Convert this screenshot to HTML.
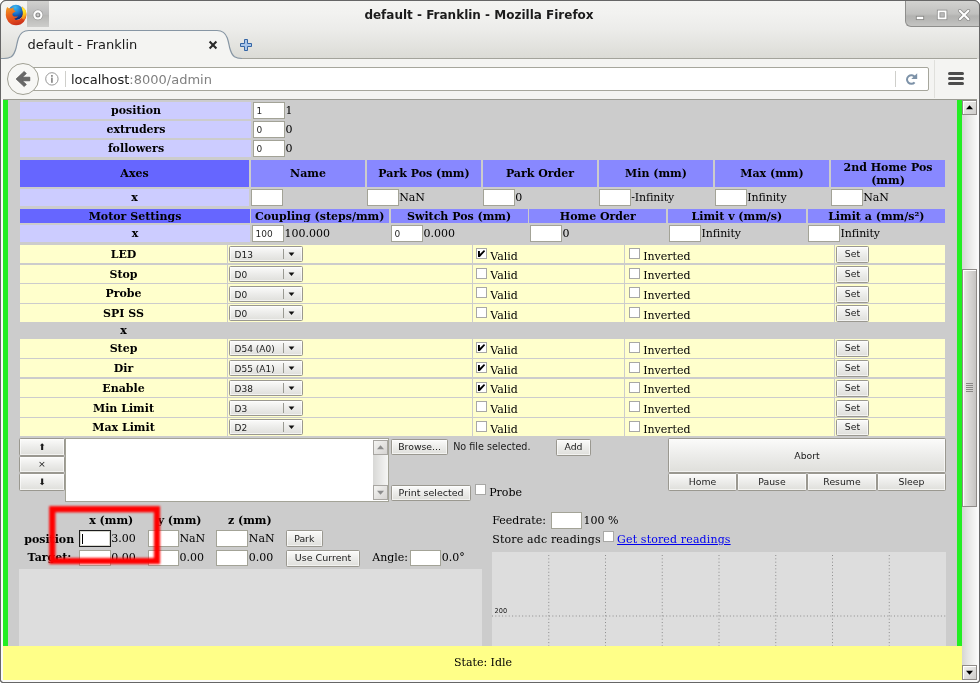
<!DOCTYPE html>
<html lang="en"><head><meta charset="utf-8"><title>default - Franklin</title>
<style>
html,body{margin:0;padding:0}
body{will-change:transform;width:980px;height:683px;overflow:hidden;position:relative;background:#fff;font-family:"DejaVu Serif","Liberation Serif",serif;font-size:11px;color:#000}
div,span,svg.a{position:absolute;box-sizing:border-box}
.t{font-family:"DejaVu Serif","Liberation Serif",serif;font-size:11px;line-height:13px;white-space:pre}
.b{font-weight:bold}
.c{transform:translateX(-50%);text-align:center}
.s{font-family:"DejaVu Sans","Liberation Sans",sans-serif;font-size:9.3px;line-height:12px;white-space:pre;color:#1a1a1a}
.in{background:#fff;border:1px solid #a3a397}
.inf{background:#fff;border:1px solid #1c1c1c;box-shadow:inset 0 0 0 1px #d8d8d0}
.btn{border:1px solid #9a9890;border-radius:1.5px;background:linear-gradient(#fbfbfa,#ececea 50%,#dfdfdb);box-shadow:inset 0 0 0 1px rgba(255,255,255,.6)}
.cb{width:11px;height:11px;background:#fff;border:1px solid #a8a8a6}
.lab{background:#ccccff}
.h1{background:#6666ff}
.h2{background:#8888ff}
.y{background:#ffffcc}
.ttl{font-family:"DejaVu Sans","Liberation Sans",sans-serif;font-weight:bold;font-size:12px;line-height:16px;white-space:pre;color:#1c1c1c}
.u{font-family:"DejaVu Sans","Liberation Sans",sans-serif;font-size:13px;line-height:16px;white-space:pre;color:#1a1a1a}
.u i{font-style:normal;color:#808080}
.tiny{font-family:"DejaVu Sans","Liberation Sans",sans-serif;font-size:6.6px;line-height:9px;color:#222;white-space:pre}
</style></head><body>
<div id="win" style="left:0;top:0;width:980px;height:683px;background:#fafafa;border:1px solid #666;border-radius:6px 6px 3px 3px;overflow:hidden"></div>
<div class="" style="left:1px;top:1px;width:978px;height:58px;background:linear-gradient(#f4f4f2 0,#f2f2f0 12px,#ececea 28px,#e4e4e0 43px,#dbdbd6 57px);border-radius:5px 5px 0 0"></div>
<div class="" style="left:3px;top:58px;width:974px;height:1px;background:#a3a39b"></div>
<div class="" style="left:1px;top:59px;width:978px;height:40px;background:#f4f4f2"></div>
<div class="" style="left:3px;top:99px;width:974px;height:1px;background:#9a9a92"></div>
<svg class="a" style="left:5px;top:4px" width="22" height="22" viewBox="0 0 22 22">
<defs>
<radialGradient id="gl" cx="0.45" cy="0.18" r="0.9"><stop offset="0" stop-color="#3ebcf2"/><stop offset="0.45" stop-color="#1a74cc"/><stop offset="0.8" stop-color="#0b2f82"/><stop offset="1" stop-color="#08205e"/></radialGradient>
<linearGradient id="fx" x1="0.2" y1="0" x2="0.5" y2="1"><stop offset="0" stop-color="#f49a20"/><stop offset="0.4" stop-color="#ea671e"/><stop offset="0.8" stop-color="#dc421c"/><stop offset="1" stop-color="#c9301a"/></linearGradient>
<linearGradient id="yl" x1="0" y1="0" x2="0.2" y2="1"><stop offset="0" stop-color="#fbd23a"/><stop offset="0.35" stop-color="#ffee2a"/><stop offset="0.7" stop-color="#fbbf1c"/><stop offset="1" stop-color="#ef7d1c"/></linearGradient>
</defs>
<circle cx="10.9" cy="8.4" r="7.7" fill="url(#gl)"/>
<path d="M2.2 3.1 C1.2 4.8 0.8 7.4 0.9 9.4 A10.3 10.3 0 0 0 11.1 21.2 A10.3 10.3 0 0 0 21.3 9.5 C21.2 7.5 20.4 5.8 19.7 4.9 L17 2.6 L16.7 4.1 L17.8 7.5 L17.8 10.6 L16.3 14 C15.8 14.5 15 15 14 15.5 C13.2 16 12 16.3 10.8 15.9 C10.3 15.7 9.8 15.3 9.4 14.4 C11 14.2 12.6 13.2 12.9 12.2 C12 12.5 10.8 12.7 9.6 12.5 C9 12.4 8.2 12 7.5 10.9 C7.4 10.3 7.5 9.6 7.9 9 C8.6 8.4 9.8 8 10.8 7.2 C9.8 6.8 9 6.2 8.6 5.6 L8.3 3.2 L6.8 4.6 C6 4.3 5 4.2 4.1 4.6 Z" fill="url(#fx)"/>
<path d="M17 2.6 L19.7 4.9 C20.6 6 21.2 7.5 21.2 9 C21.3 10.3 21.2 11.5 20.8 12.5 C20.5 13.8 20 15 19.3 15.9 C18.5 15.5 17.2 14.6 16.3 14 C17.3 13 17.8 11.8 17.8 10.6 C18 9.4 18 8.5 17.8 7.5 C17.5 6.2 17.1 5 16.7 4.1 Z" fill="url(#yl)"/>
</svg>
<div class="" style="left:27px;top:1px;width:22px;height:26px;background:linear-gradient(#d1d1cf,#bababa 52%,#b6b6b4 56%,#cdcdcb)"></div>
<svg class="a" style="left:31px;top:8px" width="14" height="14" viewBox="0 0 14 14"><circle cx="6.9" cy="6.9" r="5.3" fill="#858583" opacity=".6"/><circle cx="6.9" cy="6.9" r="4.6" fill="#fff"/><circle cx="6.9" cy="6.9" r="1.9" fill="#c9c9c9" stroke="#8c8c8c" stroke-width="1.2"/></svg>
<span class="ttl c" style="left:479px;top:7px">default - Franklin - Mozilla Firefox</span>
<div class="" style="left:905px;top:1px;width:74px;height:26px;background:linear-gradient(#d2d2d0,#c0c0be 13px,#b3b3b1 15px,#b6b6b4 18px,#c4c4c2);border-radius:0 5px 0 6px;border-left:1px solid #8e8e8c;border-bottom:1px solid #8e8e8c"></div>
<svg class="a" style="left:905px;top:1px" width="74" height="26" viewBox="905 1 74 26">
<rect x="916.3" y="16.3" width="7.4" height="3.3" fill="#fff" stroke="#8a8a88" stroke-width=".9"/>
<rect x="936.9" y="9.7" width="10.4" height="10.4" fill="#8c8c8a"/>
<rect x="937.7" y="10.5" width="8.8" height="8.8" fill="#fff"/>
<rect x="939.5" y="12.3" width="5.2" height="5.2" fill="#8e8e8c"/>
<rect x="940.3" y="13.1" width="3.6" height="3.6" fill="#bababa"/>
<path d="M959.8 10.8 L968.4 19.2 M968.4 10.8 L959.8 19.2" stroke="#8a8a88" stroke-width="3.6" stroke-linecap="round"/>
<path d="M959.8 10.8 L968.4 19.2 M968.4 10.8 L959.8 19.2" stroke="#fff" stroke-width="2.1" stroke-linecap="round"/>
</svg>
<svg class="a" style="left:0;top:28px" width="260" height="32" viewBox="0 28 260 32">
<path d="M1 58.5 L3.8 58.5 C6.8 58.5 9.3 58.2 11.3 56.8 C14.3 54.5 15.3 51 16.2 47.5 C16.8 45 17.3 41.5 18.5 38 C20.3 33 23.8 30.5 28.8 30.5 L217 30.5 C222 30.5 225.5 33 227.3 38 C228.5 41.5 229 45 229.6 47.5 C230.5 51 231.5 54.5 234.5 56.8 C236.5 58.2 239 58.5 242 58.5 L242 60 L1 60 Z" fill="#f4f4f2"/>
<path d="M1 58.5 L3.8 58.5 C6.8 58.5 9.3 58.2 11.3 56.8 C14.3 54.5 15.3 51 16.2 47.5 C16.8 45 17.3 41.5 18.5 38 C20.3 33 23.8 30.5 28.8 30.5 L217 30.5 C222 30.5 225.5 33 227.3 38 C228.5 41.5 229 45 229.6 47.5 C230.5 51 231.5 54.5 234.5 56.8 C236.5 58.2 239 58.5 242 58.5" fill="none" stroke="#8796a4" stroke-width="1.2"/>
</svg>
<span class="u" style="left:27.5px;top:37px">default - Franklin</span>
<svg class="a" style="left:208px;top:40px" width="10" height="10" viewBox="0 0 10 10"><path d="M1.6 1.6 L8.4 8.4 M8.4 1.6 L1.6 8.4" stroke="#2a2a2a" stroke-width="2.1"/></svg>
<svg class="a" style="left:239px;top:38px" width="14" height="14" viewBox="0 0 14 14"><path d="M5.5 1.5 H8.5 V5.5 H12.5 V8.5 H8.5 V12.5 H5.5 V8.5 H1.5 V5.5 H5.5 Z" fill="#a9c6ea" stroke="#3465a4" stroke-width="1" stroke-linejoin="round"/></svg>
<div class="" style="left:30px;top:67px;width:899px;height:24px;background:#fff;border:1px solid #a6a69c;border-radius:2px"></div>
<div class="" style="left:7px;top:63px;width:32px;height:32px;background:#f7f7f5;border:1px solid #a0a094;border-radius:16px"></div>
<svg class="a" style="left:14px;top:69px" width="18" height="20" viewBox="14 69 18 20"><path d="M16.1 79 L24.2 71.4 L26.3 73.6 L22.4 77.2 L29.8 77.2 L29.8 80.8 L22.4 80.8 L26.3 84.4 L24.2 86.6 Z" fill="#686868" stroke="#4e4e4e" stroke-width=".7" stroke-linejoin="round"/></svg>
<svg class="a" style="left:44px;top:71px" width="16" height="16" viewBox="44 71 16 16"><circle cx="51.9" cy="78.9" r="6.2" fill="none" stroke="#979797" stroke-width="1"/><rect x="51" y="77.6" width="1.8" height="5.2" fill="#8e8e8e"/><rect x="51" y="75" width="1.8" height="1.8" fill="#8e8e8e"/></svg>
<div class="" style="left:65px;top:71px;width:1px;height:16px;background:#cfcfcb"></div>
<span class="u" style="left:71px;top:72px">localhost<i>:8000/admin</i></span>
<div class="" style="left:895px;top:71px;width:1px;height:16px;background:#cfcfcb"></div>
<svg class="a" style="left:903px;top:70px" width="18" height="18" viewBox="903 70 18 18"><path d="M914.6 82.3 A4.3 4.3 0 1 1 914.9 77.2" fill="none" stroke="#7d92a8" stroke-width="2"/><path d="M917.2 73.3 L917.2 79.1 L911.3 79.1 Z" fill="#7d92a8"/></svg>
<div class="" style="left:934px;top:60px;width:1px;height:38px;background:#e0e0dc"></div>
<div class="" style="left:948px;top:72px;width:16px;height:3px;background:#4c4c4c;border-radius:1.5px"></div>
<div class="" style="left:948px;top:77px;width:16px;height:3px;background:#4c4c4c;border-radius:1.5px"></div>
<div class="" style="left:948px;top:82px;width:16px;height:3px;background:#4c4c4c;border-radius:1.5px"></div>
<div class="" style="left:3px;top:100px;width:959px;height:580px;background:#cccccc"></div>
<div class="" style="left:3px;top:100px;width:5px;height:546px;background:#22ee22"></div>
<div class="" style="left:957px;top:100px;width:5px;height:546px;background:#22ee22"></div>
<div class="" style="left:962px;top:100px;width:15px;height:580px;background:linear-gradient(90deg,#d6d6d4,#e6e6e4 40%,#f8f8f7)"></div>
<div class="" style="left:962px;top:100px;width:15px;height:15px;background:linear-gradient(135deg,#f2f2f0,#cfcdcb);border:1px solid #8f8b88;box-shadow:inset 1px 1px 0 #fff"></div>
<svg class="a" style="left:962px;top:100px" width="15" height="15"><path d="M4 9.2 L11 9.2 L7.5 5.2 Z" fill="#000"/></svg>
<div class="" style="left:962px;top:665px;width:15px;height:15px;background:linear-gradient(135deg,#f2f2f0,#cfcdcb);border:1px solid #8f8b88;box-shadow:inset 1px 1px 0 #fff"></div>
<svg class="a" style="left:962px;top:665px" width="15" height="15"><path d="M4 5.8 L11 5.8 L7.5 9.8 Z" fill="#000"/></svg>
<div class="" style="left:962px;top:269px;width:15px;height:238px;background:linear-gradient(90deg,#eceae8,#d4d2d0 60%,#c6c4c2);border:1px solid #8f8b88;box-shadow:inset 1px 1px 0 #fff"></div>
<div class="" style="left:966px;top:383px;width:7px;height:1px;background:#8a8886"></div>
<div class="" style="left:966px;top:385px;width:7px;height:1px;background:#8a8886"></div>
<div class="" style="left:966px;top:387px;width:7px;height:1px;background:#8a8886"></div>
<div class="" style="left:966px;top:389px;width:7px;height:1px;background:#8a8886"></div>
<div class="" style="left:966px;top:391px;width:7px;height:1px;background:#8a8886"></div>
<div class="lab" style="left:20px;top:102px;width:231px;height:17px;"></div>
<span class="t c b" style="left:136px;top:104px;">position</span>
<div class="in" style="left:253px;top:102px;width:32px;height:17px"></div>
<span class="s" style="left:256.5px;top:105px;font-size:9px;color:#2a2a2a">1</span>
<span class="t" style="left:285.4px;top:104px;">1</span>
<div class="lab" style="left:20px;top:121px;width:231px;height:17px;"></div>
<span class="t c b" style="left:136px;top:123px;">extruders</span>
<div class="in" style="left:253px;top:121px;width:32px;height:17px"></div>
<span class="s" style="left:256.5px;top:124px;font-size:9px;color:#2a2a2a">0</span>
<span class="t" style="left:285.4px;top:123px;">0</span>
<div class="lab" style="left:20px;top:140px;width:231px;height:17px;"></div>
<span class="t c b" style="left:136px;top:142px;">followers</span>
<div class="in" style="left:253px;top:140px;width:32px;height:17px"></div>
<span class="s" style="left:256.5px;top:143px;font-size:9px;color:#2a2a2a">0</span>
<span class="t" style="left:285.4px;top:142px;">0</span>
<div class="h1" style="left:20px;top:160px;width:229px;height:27px;"></div>
<span class="t c b" style="left:134.5px;top:167px;">Axes</span>
<div class="h2" style="left:251px;top:160px;width:114px;height:27px;"></div>
<span class="t c b" style="left:308px;top:167px;">Name</span>
<div class="h2" style="left:367px;top:160px;width:114px;height:27px;"></div>
<span class="t c b" style="left:424px;top:167px;">Park Pos (mm)</span>
<div class="h2" style="left:483px;top:160px;width:114px;height:27px;"></div>
<span class="t c b" style="left:540px;top:167px;">Park Order</span>
<div class="h2" style="left:599px;top:160px;width:114px;height:27px;"></div>
<span class="t c b" style="left:656px;top:167px;">Min (mm)</span>
<div class="h2" style="left:715px;top:160px;width:114px;height:27px;"></div>
<span class="t c b" style="left:772px;top:167px;">Max (mm)</span>
<div class="h2" style="left:831px;top:160px;width:114px;height:27px;"></div>
<span class="t c b" style="left:888px;top:161px;">2nd Home Pos</span>
<span class="t c b" style="left:888px;top:174px;">(mm)</span>
<div class="lab" style="left:20px;top:189px;width:229px;height:17px;"></div>
<span class="t c b" style="left:134.5px;top:191px;">x</span>
<div class="in" style="left:251px;top:189px;width:32px;height:17px"></div>
<div class="in" style="left:367px;top:189px;width:32px;height:17px"></div>
<span class="t" style="left:399.2px;top:191px;">NaN</span>
<div class="in" style="left:483px;top:189px;width:32px;height:17px"></div>
<span class="t" style="left:515.2px;top:191px;">0</span>
<div class="in" style="left:599px;top:189px;width:32px;height:17px"></div>
<span class="t" style="left:631.2px;top:191px;letter-spacing:-.12px">-Infinity</span>
<div class="in" style="left:715px;top:189px;width:32px;height:17px"></div>
<span class="t" style="left:747.2px;top:191px;letter-spacing:-.12px">Infinity</span>
<div class="in" style="left:831px;top:189px;width:32px;height:17px"></div>
<span class="t" style="left:863.2px;top:191px;">NaN</span>
<div class="h1" style="left:20px;top:209px;width:230px;height:14px;"></div>
<span class="t c b" style="left:135px;top:209.5px;">Motor Settings</span>
<div class="h2" style="left:251px;top:209px;width:138px;height:14px;"></div>
<span class="t c b" style="left:319.7px;top:209.5px;">Coupling (steps/mm)</span>
<div class="h2" style="left:391px;top:209px;width:137px;height:14px;"></div>
<span class="t c b" style="left:459.1px;top:209.5px;">Switch Pos (mm)</span>
<div class="h2" style="left:529px;top:209px;width:137px;height:14px;"></div>
<span class="t c b" style="left:597.8px;top:209.5px;">Home Order</span>
<div class="h2" style="left:668px;top:209px;width:138px;height:14px;"></div>
<span class="t c b" style="left:736.9px;top:209.5px;">Limit v (mm/s)</span>
<div class="h2" style="left:808px;top:209px;width:137px;height:14px;"></div>
<span class="t c b" style="left:876.3px;top:209.5px;">Limit a (mm/s²)</span>
<div class="lab" style="left:20px;top:225px;width:230px;height:17px;"></div>
<span class="t c b" style="left:135px;top:226.5px;">x</span>
<div class="in" style="left:252px;top:225px;width:32px;height:17px"></div>
<span class="s" style="left:255.5px;top:227.5px;font-size:9px;color:#2a2a2a">100</span>
<span class="t" style="left:284.6px;top:226.5px;">100.000</span>
<div class="in" style="left:391px;top:225px;width:32px;height:17px"></div>
<span class="s" style="left:394.5px;top:227.5px;font-size:9px;color:#2a2a2a">0</span>
<span class="t" style="left:423.6px;top:226.5px;">0.000</span>
<div class="in" style="left:530px;top:225px;width:32px;height:17px"></div>
<span class="t" style="left:562.6px;top:226.5px;">0</span>
<div class="in" style="left:669px;top:225px;width:32px;height:17px"></div>
<span class="t" style="left:701.6px;top:226.5px;letter-spacing:-.12px">Infinity</span>
<div class="in" style="left:808px;top:225px;width:32px;height:17px"></div>
<span class="t" style="left:840.6px;top:226.5px;letter-spacing:-.12px">Infinity</span>
<div class="y" style="left:20px;top:245px;width:207px;height:18px;"></div>
<span class="t c b" style="left:123.5px;top:247.95px;">LED</span>
<div class="y" style="left:228px;top:245px;width:244px;height:18px;"></div>
<div class="y" style="left:473px;top:245px;width:151px;height:18px;"></div>
<div class="y" style="left:625px;top:245px;width:209px;height:18px;"></div>
<div class="y" style="left:835px;top:245px;width:110px;height:18px;"></div>
<div class="btn" style="left:229px;top:246px;width:74px;height:16px"></div>
<div class="" style="left:283px;top:249px;width:1px;height:10px;background:#9a9a92"></div>
<svg class="a" style="left:288px;top:252px" width="7" height="5"><path d="M0.6 0.6 L6.4 0.6 L3.5 4.1 Z" fill="#111"/></svg>
<span class="s" style="left:234.5px;top:248.5px;font-size:9px">D13</span>
<div class="cb" style="left:476px;top:248px"></div>
<svg class="a" style="left:476px;top:248px" width="11" height="11" viewBox="0 0 11 11"><path d="M2 3 L3.9 3 L3.9 6 L8 1.9 L9.1 3.2 L3.9 8.9 L2 8.9 Z" fill="#000"/></svg>
<span class="t" style="left:490.3px;top:249.55px;">Valid</span>
<div class="cb" style="left:629px;top:248px"></div>
<span class="t" style="left:643.2px;top:249.55px;">Inverted</span>
<div class="btn" style="left:836px;top:246px;width:33px;height:17px"></div>
<span class="s c" style="left:852.5px;top:248.3px;">Set</span>
<div class="y" style="left:20px;top:265px;width:207px;height:18px;"></div>
<span class="t c b" style="left:123.5px;top:267.7px;">Stop</span>
<div class="y" style="left:228px;top:265px;width:244px;height:18px;"></div>
<div class="y" style="left:473px;top:265px;width:151px;height:18px;"></div>
<div class="y" style="left:625px;top:265px;width:209px;height:18px;"></div>
<div class="y" style="left:835px;top:265px;width:110px;height:18px;"></div>
<div class="btn" style="left:229px;top:266px;width:74px;height:16px"></div>
<div class="" style="left:283px;top:269px;width:1px;height:10px;background:#9a9a92"></div>
<svg class="a" style="left:288px;top:272px" width="7" height="5"><path d="M0.6 0.6 L6.4 0.6 L3.5 4.1 Z" fill="#111"/></svg>
<span class="s" style="left:234.5px;top:268.5px;font-size:9px">D0</span>
<div class="cb" style="left:476px;top:268px"></div>
<span class="t" style="left:490.3px;top:269.3px;">Valid</span>
<div class="cb" style="left:629px;top:268px"></div>
<span class="t" style="left:643.2px;top:269.3px;">Inverted</span>
<div class="btn" style="left:836px;top:266px;width:33px;height:17px"></div>
<span class="s c" style="left:852.5px;top:268.3px;">Set</span>
<div class="y" style="left:20px;top:284px;width:207px;height:19px;"></div>
<span class="t c b" style="left:123.5px;top:287.45px;">Probe</span>
<div class="y" style="left:228px;top:284px;width:244px;height:19px;"></div>
<div class="y" style="left:473px;top:284px;width:151px;height:19px;"></div>
<div class="y" style="left:625px;top:284px;width:209px;height:19px;"></div>
<div class="y" style="left:835px;top:284px;width:110px;height:19px;"></div>
<div class="btn" style="left:229px;top:286px;width:74px;height:16px"></div>
<div class="" style="left:283px;top:289px;width:1px;height:10px;background:#9a9a92"></div>
<svg class="a" style="left:288px;top:292px" width="7" height="5"><path d="M0.6 0.6 L6.4 0.6 L3.5 4.1 Z" fill="#111"/></svg>
<span class="s" style="left:234.5px;top:288.5px;font-size:9px">D0</span>
<div class="cb" style="left:476px;top:287px"></div>
<span class="t" style="left:490.3px;top:289.05px;">Valid</span>
<div class="cb" style="left:629px;top:287px"></div>
<span class="t" style="left:643.2px;top:289.05px;">Inverted</span>
<div class="btn" style="left:836px;top:286px;width:33px;height:17px"></div>
<span class="s c" style="left:852.5px;top:288.3px;">Set</span>
<div class="y" style="left:20px;top:304px;width:207px;height:18px;"></div>
<span class="t c b" style="left:123.5px;top:307.2px;">SPI SS</span>
<div class="y" style="left:228px;top:304px;width:244px;height:18px;"></div>
<div class="y" style="left:473px;top:304px;width:151px;height:18px;"></div>
<div class="y" style="left:625px;top:304px;width:209px;height:18px;"></div>
<div class="y" style="left:835px;top:304px;width:110px;height:18px;"></div>
<div class="btn" style="left:229px;top:305px;width:74px;height:16px"></div>
<div class="" style="left:283px;top:308px;width:1px;height:10px;background:#9a9a92"></div>
<svg class="a" style="left:288px;top:311px" width="7" height="5"><path d="M0.6 0.6 L6.4 0.6 L3.5 4.1 Z" fill="#111"/></svg>
<span class="s" style="left:234.5px;top:307.5px;font-size:9px">D0</span>
<div class="cb" style="left:476px;top:307px"></div>
<span class="t" style="left:490.3px;top:308.8px;">Valid</span>
<div class="cb" style="left:629px;top:307px"></div>
<span class="t" style="left:643.2px;top:308.8px;">Inverted</span>
<div class="btn" style="left:836px;top:305px;width:33px;height:17px"></div>
<span class="s c" style="left:852.5px;top:307.3px;">Set</span>
<span class="t c b" style="left:123.5px;top:324px;">x</span>
<div class="y" style="left:20px;top:339px;width:207px;height:19px;"></div>
<span class="t c b" style="left:123.5px;top:342.3px;">Step</span>
<div class="y" style="left:228px;top:339px;width:244px;height:19px;"></div>
<div class="y" style="left:473px;top:339px;width:151px;height:19px;"></div>
<div class="y" style="left:625px;top:339px;width:209px;height:19px;"></div>
<div class="y" style="left:835px;top:339px;width:110px;height:19px;"></div>
<div class="btn" style="left:229px;top:340px;width:74px;height:16px"></div>
<div class="" style="left:283px;top:343px;width:1px;height:10px;background:#9a9a92"></div>
<svg class="a" style="left:288px;top:346px" width="7" height="5"><path d="M0.6 0.6 L6.4 0.6 L3.5 4.1 Z" fill="#111"/></svg>
<span class="s" style="left:234.5px;top:342.5px;font-size:9px">D54 (A0)</span>
<div class="cb" style="left:476px;top:342px"></div>
<svg class="a" style="left:476px;top:342px" width="11" height="11" viewBox="0 0 11 11"><path d="M2 3 L3.9 3 L3.9 6 L8 1.9 L9.1 3.2 L3.9 8.9 L2 8.9 Z" fill="#000"/></svg>
<span class="t" style="left:490.3px;top:343.90000000000003px;">Valid</span>
<div class="cb" style="left:629px;top:342px"></div>
<span class="t" style="left:643.2px;top:343.90000000000003px;">Inverted</span>
<div class="btn" style="left:836px;top:340px;width:33px;height:17px"></div>
<span class="s c" style="left:852.5px;top:342.3px;">Set</span>
<div class="y" style="left:20px;top:359px;width:207px;height:18px;"></div>
<span class="t c b" style="left:123.5px;top:362.05px;">Dir</span>
<div class="y" style="left:228px;top:359px;width:244px;height:18px;"></div>
<div class="y" style="left:473px;top:359px;width:151px;height:18px;"></div>
<div class="y" style="left:625px;top:359px;width:209px;height:18px;"></div>
<div class="y" style="left:835px;top:359px;width:110px;height:18px;"></div>
<div class="btn" style="left:229px;top:360px;width:74px;height:16px"></div>
<div class="" style="left:283px;top:363px;width:1px;height:10px;background:#9a9a92"></div>
<svg class="a" style="left:288px;top:366px" width="7" height="5"><path d="M0.6 0.6 L6.4 0.6 L3.5 4.1 Z" fill="#111"/></svg>
<span class="s" style="left:234.5px;top:362.5px;font-size:9px">D55 (A1)</span>
<div class="cb" style="left:476px;top:362px"></div>
<svg class="a" style="left:476px;top:362px" width="11" height="11" viewBox="0 0 11 11"><path d="M2 3 L3.9 3 L3.9 6 L8 1.9 L9.1 3.2 L3.9 8.9 L2 8.9 Z" fill="#000"/></svg>
<span class="t" style="left:490.3px;top:363.65000000000003px;">Valid</span>
<div class="cb" style="left:629px;top:362px"></div>
<span class="t" style="left:643.2px;top:363.65000000000003px;">Inverted</span>
<div class="btn" style="left:836px;top:360px;width:33px;height:17px"></div>
<span class="s c" style="left:852.5px;top:362.3px;">Set</span>
<div class="y" style="left:20px;top:379px;width:207px;height:18px;"></div>
<span class="t c b" style="left:123.5px;top:381.8px;">Enable</span>
<div class="y" style="left:228px;top:379px;width:244px;height:18px;"></div>
<div class="y" style="left:473px;top:379px;width:151px;height:18px;"></div>
<div class="y" style="left:625px;top:379px;width:209px;height:18px;"></div>
<div class="y" style="left:835px;top:379px;width:110px;height:18px;"></div>
<div class="btn" style="left:229px;top:380px;width:74px;height:16px"></div>
<div class="" style="left:283px;top:383px;width:1px;height:10px;background:#9a9a92"></div>
<svg class="a" style="left:288px;top:386px" width="7" height="5"><path d="M0.6 0.6 L6.4 0.6 L3.5 4.1 Z" fill="#111"/></svg>
<span class="s" style="left:234.5px;top:382.5px;font-size:9px">D38</span>
<div class="cb" style="left:476px;top:382px"></div>
<svg class="a" style="left:476px;top:382px" width="11" height="11" viewBox="0 0 11 11"><path d="M2 3 L3.9 3 L3.9 6 L8 1.9 L9.1 3.2 L3.9 8.9 L2 8.9 Z" fill="#000"/></svg>
<span class="t" style="left:490.3px;top:383.40000000000003px;">Valid</span>
<div class="cb" style="left:629px;top:382px"></div>
<span class="t" style="left:643.2px;top:383.40000000000003px;">Inverted</span>
<div class="btn" style="left:836px;top:380px;width:33px;height:17px"></div>
<span class="s c" style="left:852.5px;top:382.3px;">Set</span>
<div class="y" style="left:20px;top:398px;width:207px;height:19px;"></div>
<span class="t c b" style="left:123.5px;top:401.55px;">Min Limit</span>
<div class="y" style="left:228px;top:398px;width:244px;height:19px;"></div>
<div class="y" style="left:473px;top:398px;width:151px;height:19px;"></div>
<div class="y" style="left:625px;top:398px;width:209px;height:19px;"></div>
<div class="y" style="left:835px;top:398px;width:110px;height:19px;"></div>
<div class="btn" style="left:229px;top:400px;width:74px;height:16px"></div>
<div class="" style="left:283px;top:403px;width:1px;height:10px;background:#9a9a92"></div>
<svg class="a" style="left:288px;top:406px" width="7" height="5"><path d="M0.6 0.6 L6.4 0.6 L3.5 4.1 Z" fill="#111"/></svg>
<span class="s" style="left:234.5px;top:402.5px;font-size:9px">D3</span>
<div class="cb" style="left:476px;top:401px"></div>
<span class="t" style="left:490.3px;top:403.15000000000003px;">Valid</span>
<div class="cb" style="left:629px;top:401px"></div>
<span class="t" style="left:643.2px;top:403.15000000000003px;">Inverted</span>
<div class="btn" style="left:836px;top:400px;width:33px;height:17px"></div>
<span class="s c" style="left:852.5px;top:402.3px;">Set</span>
<div class="y" style="left:20px;top:418px;width:207px;height:18px;"></div>
<span class="t c b" style="left:123.5px;top:421.3px;">Max Limit</span>
<div class="y" style="left:228px;top:418px;width:244px;height:18px;"></div>
<div class="y" style="left:473px;top:418px;width:151px;height:18px;"></div>
<div class="y" style="left:625px;top:418px;width:209px;height:18px;"></div>
<div class="y" style="left:835px;top:418px;width:110px;height:18px;"></div>
<div class="btn" style="left:229px;top:419px;width:74px;height:16px"></div>
<div class="" style="left:283px;top:422px;width:1px;height:10px;background:#9a9a92"></div>
<svg class="a" style="left:288px;top:425px" width="7" height="5"><path d="M0.6 0.6 L6.4 0.6 L3.5 4.1 Z" fill="#111"/></svg>
<span class="s" style="left:234.5px;top:421.5px;font-size:9px">D2</span>
<div class="cb" style="left:476px;top:421px"></div>
<span class="t" style="left:490.3px;top:422.90000000000003px;">Valid</span>
<div class="cb" style="left:629px;top:421px"></div>
<span class="t" style="left:643.2px;top:422.90000000000003px;">Inverted</span>
<div class="btn" style="left:836px;top:419px;width:33px;height:17px"></div>
<span class="s c" style="left:852.5px;top:421.3px;">Set</span>
<div class="btn" style="left:19px;top:438px;width:46px;height:18px"></div>
<span class="s c" style="left:42.0px;top:440.6px;font-size:9px">⬆</span>
<div class="btn" style="left:19px;top:456px;width:46px;height:17px"></div>
<span class="s c" style="left:42.0px;top:457.8px;">×</span>
<div class="btn" style="left:19px;top:473px;width:46px;height:18px"></div>
<span class="s c" style="left:42.0px;top:476px;font-size:9px">⬇</span>
<div class="in" style="left:65px;top:438px;width:324px;height:64px;"></div>
<div class="" style="left:373px;top:440px;width:15px;height:60px;background:linear-gradient(90deg,#d8d8d6,#f6f6f5)"></div>
<div class="" style="left:373px;top:440px;width:15px;height:15px;background:linear-gradient(135deg,#f4f4f2,#d6d4d2);border:1px solid #a8a6a2"></div>
<svg class="a" style="left:373px;top:440px" width="15" height="15"><path d="M4 9.3 L11 9.3 L7.5 5.3 Z" fill="#8c8c8c"/></svg>
<div class="" style="left:373px;top:485px;width:15px;height:15px;background:linear-gradient(135deg,#f4f4f2,#d6d4d2);border:1px solid #a8a6a2"></div>
<svg class="a" style="left:373px;top:485px" width="15" height="15"><path d="M4 5.7 L11 5.7 L7.5 9.7 Z" fill="#8c8c8c"/></svg>
<div class="btn" style="left:390.7px;top:438.5px;width:57.8px;height:16.3px"></div>
<span class="s c" style="left:419.59999999999997px;top:441px;">Browse...</span>
<span class="s" style="left:453.2px;top:441px;font-size:9.6px">No file selected.</span>
<div class="btn" style="left:556.2px;top:438.5px;width:34.5px;height:17px"></div>
<span class="s c" style="left:573.45px;top:441px;">Add</span>
<div class="btn" style="left:390.7px;top:485px;width:80.8px;height:15.7px"></div>
<span class="s c" style="left:431.09999999999997px;top:487px;font-size:9.5px">Print selected</span>
<div class="cb" style="left:475px;top:484px"></div>
<span class="t" style="left:489.2px;top:486.3px;">Probe</span>
<div class="btn" style="left:668px;top:438px;width:278px;height:35px"></div>
<span class="s c" style="left:807.0px;top:450px;">Abort</span>
<div class="btn" style="left:668px;top:473px;width:69px;height:18px"></div>
<span class="s c" style="left:702.5px;top:476px;">Home</span>
<div class="btn" style="left:737px;top:473px;width:70px;height:18px"></div>
<span class="s c" style="left:772.0px;top:476px;">Pause</span>
<div class="btn" style="left:807px;top:473px;width:70px;height:18px"></div>
<span class="s c" style="left:842.0px;top:476px;">Resume</span>
<div class="btn" style="left:877px;top:473px;width:69px;height:18px"></div>
<span class="s c" style="left:911.5px;top:476px;">Sleep</span>
<span class="t c b" style="left:111.2px;top:514.2px;">x (mm)</span>
<span class="t c b" style="left:179.6px;top:514.2px;">y (mm)</span>
<span class="t c b" style="left:249.8px;top:514.2px;">z (mm)</span>
<span class="t b" style="left:24.2px;top:532.5px;">position</span>
<span class="t b" style="left:27.5px;top:551.2px;">Target:</span>
<div class="inf" style="left:79px;top:530px;width:32px;height:17px"></div>
<div class="" style="left:82px;top:534px;width:1px;height:10px;background:#000"></div>
<span class="t" style="left:111.2px;top:532.2px;">3.00</span>
<div class="in" style="left:147.5px;top:530px;width:31.5px;height:17px"></div>
<span class="t" style="left:179.4px;top:532.2px;">NaN</span>
<div class="in" style="left:216.2px;top:530px;width:31.5px;height:17px"></div>
<span class="t" style="left:248.8px;top:532.2px;">NaN</span>
<div class="in" style="left:79px;top:550px;width:32px;height:16px"></div>
<span class="t" style="left:111.2px;top:551.2px;">0.00</span>
<div class="in" style="left:147.5px;top:550px;width:31.5px;height:16px"></div>
<span class="t" style="left:179.4px;top:551.2px;">0.00</span>
<div class="in" style="left:216.2px;top:550px;width:31.5px;height:16px"></div>
<span class="t" style="left:248.8px;top:551.2px;">0.00</span>
<div class="btn" style="left:286px;top:530px;width:36.5px;height:17px"></div>
<span class="s c" style="left:304.25px;top:532.8px;">Park</span>
<div class="btn" style="left:286px;top:550px;width:74px;height:16.5px"></div>
<span class="s c" style="left:323.0px;top:552.1px;font-size:9.5px">Use Current</span>
<span class="t" style="left:372.2px;top:551.2px;">Angle:</span>
<div class="in" style="left:409.5px;top:550px;width:31.2px;height:16px"></div>
<span class="t" style="left:441.8px;top:551.2px;">0.0°</span>
<div class="" style="left:19px;top:569px;width:463px;height:77px;background:#dddddd"></div>
<div class="" style="left:492px;top:552px;width:454px;height:94px;background:#dddddd"></div>
<svg class="a" style="left:492px;top:552px" width="454" height="94" viewBox="492 552 454 94"><line x1="548.75" y1="555" x2="548.75" y2="646" stroke="#8c8c8c" stroke-width="1" stroke-dasharray="1 2.35"/><line x1="605.50" y1="555" x2="605.50" y2="646" stroke="#8c8c8c" stroke-width="1" stroke-dasharray="1 2.35"/><line x1="662.25" y1="555" x2="662.25" y2="646" stroke="#8c8c8c" stroke-width="1" stroke-dasharray="1 2.35"/><line x1="719.00" y1="555" x2="719.00" y2="646" stroke="#8c8c8c" stroke-width="1" stroke-dasharray="1 2.35"/><line x1="775.75" y1="555" x2="775.75" y2="646" stroke="#8c8c8c" stroke-width="1" stroke-dasharray="1 2.35"/><line x1="832.50" y1="555" x2="832.50" y2="646" stroke="#8c8c8c" stroke-width="1" stroke-dasharray="1 2.35"/><line x1="889.25" y1="555" x2="889.25" y2="646" stroke="#8c8c8c" stroke-width="1" stroke-dasharray="1 2.35"/><line x1="492" y1="616" x2="946" y2="616" stroke="#8c8c8c" stroke-width="1" stroke-dasharray="1 2.35"/></svg>
<span class="tiny" style="left:494.6px;top:607px">200</span>
<span class="t" style="left:492.3px;top:513.7px;">Feedrate:</span>
<div class="in" style="left:551.4px;top:512px;width:31px;height:17px"></div>
<span class="t" style="left:583.4px;top:513.7px;">100 %</span>
<span class="t" style="left:492.3px;top:532.9px;letter-spacing:.15px">Store adc readings</span>
<div class="cb" style="left:603px;top:531px"></div>
<span class="t" style="left:617.1px;top:532.9px;color:#0000ee;text-decoration:underline;letter-spacing:.14px">Get stored readings</span>
<svg class="a" style="left:40px;top:498px;filter:blur(1px)" width="130" height="75" viewBox="40 498 130 75"><rect x="52.3" y="509.2" width="104.7" height="51.8" fill="none" stroke="#ff0000" stroke-width="6.2"/></svg>
<div class="" style="left:3px;top:646px;width:959px;height:34px;background:#ffff88"></div>
<span class="t c" style="left:483px;top:655.8px;">State: Idle</span>
<div style="left:0;top:0;width:980px;height:683px;border:1px solid #666;border-radius:6px 6px 3px 3px;pointer-events:none"></div>
</body></html>
